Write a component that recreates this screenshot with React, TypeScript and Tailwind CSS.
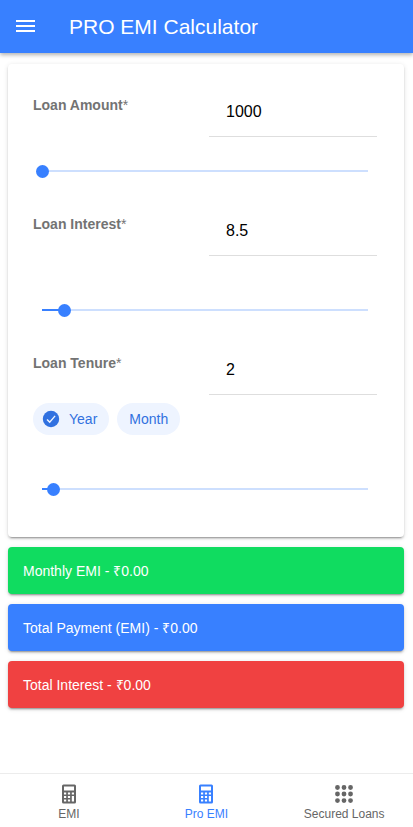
import { useState } from "react";
import type { ReactNode } from "react";
import { IoApps } from "react-icons/io5";

const cardShadow =
  "shadow-[0_3px_1px_-2px_rgba(0,0,0,0.2),0_2px_2px_0_rgba(0,0,0,0.14),0_1px_5px_0_rgba(0,0,0,0.12)]";

function CalculatorIcon({ className }: { className?: string }) {
  return (
    <svg viewBox="0 0 22 22" className={className} fill="currentColor" aria-hidden="true">
      <path
        fillRule="evenodd"
        d="M5.5 1.5h11A1.5 1.5 0 0 1 18 3v16a1.500 1.500 0 0 1-1.500 1.500h-11A1.500 1.500 0 0 1 4 19V3a1.500 1.500 0 0 1 1.500-1.500zM6 3.500v4h10v-4zM6 9.500v2h2.200v-2zM9.900 9.500v2h2.200v-2zM13.800 9.500v2H16v-2zM6 13v2h2.200v-2zM9.900 13v2h2.200v-2zM13.800 13v5.500H16V13zM6 16.500v2h2.200v-2zM9.900 16.500v2h2.200v-2z"
      />
    </svg>
  );
}

type FieldProps = {
  id: string;
  label: string;
  value: string;
  onChange: (value: string) => void;
};

function Field({ id, label, value, onChange }: FieldProps) {
  return (
    <div className="grid grid-cols-2 gap-2">
      <label htmlFor={id} className="pt-[9px] text-sm font-bold text-[#737373]">
        {label}
        <span className="font-normal">*</span>
      </label>
      <input
        id={id}
        type="text"
        inputMode="decimal"
        value={value}
        onChange={(e) => onChange(e.target.value)}
        className="h-[51px] w-full min-w-0 border-b border-[#dedede] bg-transparent px-[17px] pt-px text-base text-black outline-none"
      />
    </div>
  );
}

type SliderProps = {
  label: string;
  min: number;
  max: number;
  step: number;
  value: string;
  onChange: (value: string) => void;
};

function Slider({ label, min, max, step, value, onChange }: SliderProps) {
  const percent = ((Number(value) - min) / (max - min)) * 100;
  return (
    <div className="flex px-[3px]">
      <input
        type="range"
        aria-label={label}
        min={min}
        max={max}
        step={step}
        value={value}
        onChange={(e) => onChange(e.target.value)}
        style={{
          backgroundImage: `linear-gradient(to right, #3880ff ${percent}%, #cddffe ${percent}%)`,
        }}
        className="h-5 w-full appearance-none bg-transparent bg-[length:calc(100%-12px)_2px] bg-center bg-no-repeat [&::-webkit-slider-thumb]:size-[13px] [&::-webkit-slider-thumb]:appearance-none [&::-webkit-slider-thumb]:rounded-full [&::-webkit-slider-thumb]:bg-[#3880ff]"
      />
    </div>
  );
}

type ChipProps = { selected: boolean; onClick: () => void; children: ReactNode };

function Chip({ selected, onClick, children }: ChipProps) {
  return (
    <button
      type="button"
      aria-pressed={selected}
      onClick={onClick}
      className="flex h-8 items-center gap-2 rounded-full bg-[#eef4ff] px-3 text-sm text-[#3171e0]"
    >
      {selected && (
        <svg viewBox="0 0 20 20" className="-ml-1 size-5" aria-hidden="true">
          <circle cx="10" cy="10" r="8.2" fill="#3171e0" />
          <path d="M6 10.4l2.7 2.7 5.4-6.2" fill="none" stroke="#eef4ff" strokeWidth="1.4" />
        </svg>
      )}
      {children}
    </button>
  );
}

const results = [
  { text: "Monthly EMI - ₹0.00", color: "bg-[#10dc60]" },
  { text: "Total Payment (EMI) - ₹0.00", color: "bg-[#3880ff]" },
  { text: "Total Interest - ₹0.00", color: "bg-[#f04141]" },
];

const tabs = [
  { text: "EMI", Icon: CalculatorIcon, color: "text-[#666666]" },
  { text: "Pro EMI", Icon: CalculatorIcon, color: "text-[#3880ff]" },
  { text: "Secured Loans", Icon: IoApps, color: "text-[#666666]" },
];

export default function App() {
  const [amount, setAmount] = useState("1000");
  const [interest, setInterest] = useState("8.5");
  const [tenure, setTenure] = useState("2");
  const [unit, setUnit] = useState("year");

  return (
    <div className="flex min-h-screen flex-col bg-white font-['Liberation_Sans',Arial,sans-serif]">
      <header className="flex h-[53px] items-center gap-[34px] bg-[#3880ff] px-4 text-white shadow-[0_2px_4px_rgba(0,0,0,0.3)]">
        <button type="button" aria-label="Menu">
          <svg viewBox="0 0 19 14" className="h-[14px] w-[19px]" fill="currentColor" aria-hidden="true">
            <path d="M0 0h19v2H0zM0 5h19v2H0zM0 10h19v2H0z" />
          </svg>
        </button>
        <h1 className="text-[21px]">PRO EMI Calculator</h1>
      </header>

      <main className="flex flex-1 flex-col gap-[10px] pt-[11px] pr-[9px] pl-2">
        <section className={`rounded bg-white pt-[22px] pr-[27px] pb-[38px] pl-[25px] ${cardShadow}`}>
          <div className="flex flex-col gap-6">
            <Field id="amount" label="Loan Amount" value={amount} onChange={setAmount} />
            <Slider label="Loan Amount" min={1000} max={1000000} step={1000} value={amount} onChange={setAmount} />
            <div className="flex flex-col gap-11">
              <Field id="interest" label="Loan Interest" value={interest} onChange={setInterest} />
              <Slider label="Loan Interest" min={2} max={100} step={0.5} value={interest} onChange={setInterest} />
            </div>
            <div>
              <Field id="tenure" label="Loan Tenure" value={tenure} onChange={setTenure} />
              <div className="mt-2 mb-11 flex gap-2">
                <Chip selected={unit === "year"} onClick={() => setUnit("year")}>
                  Year
                </Chip>
                <Chip selected={unit === "month"} onClick={() => setUnit("month")}>
                  Month
                </Chip>
              </div>
              <Slider label="Loan Tenure" min={1} max={30} step={1} value={tenure} onChange={setTenure} />
            </div>
          </div>
        </section>

        {results.map(({ text, color }) => (
          <section key={text} className={`flex h-[47px] items-center rounded px-[15px] text-sm text-white ${color} ${cardShadow}`}>
            {text}
          </section>
        ))}
      </main>

      <nav className="grid h-[54px] grid-cols-3 border-t border-[#ececec]">
        {tabs.map(({ text, Icon, color }) => (
          <a key={text} href="#" className={`flex flex-col items-center gap-px pt-[9px] text-xs ${color}`}>
            <Icon className="size-[22px]" aria-hidden="true" />
            {text}
          </a>
        ))}
      </nav>
    </div>
  );
}
